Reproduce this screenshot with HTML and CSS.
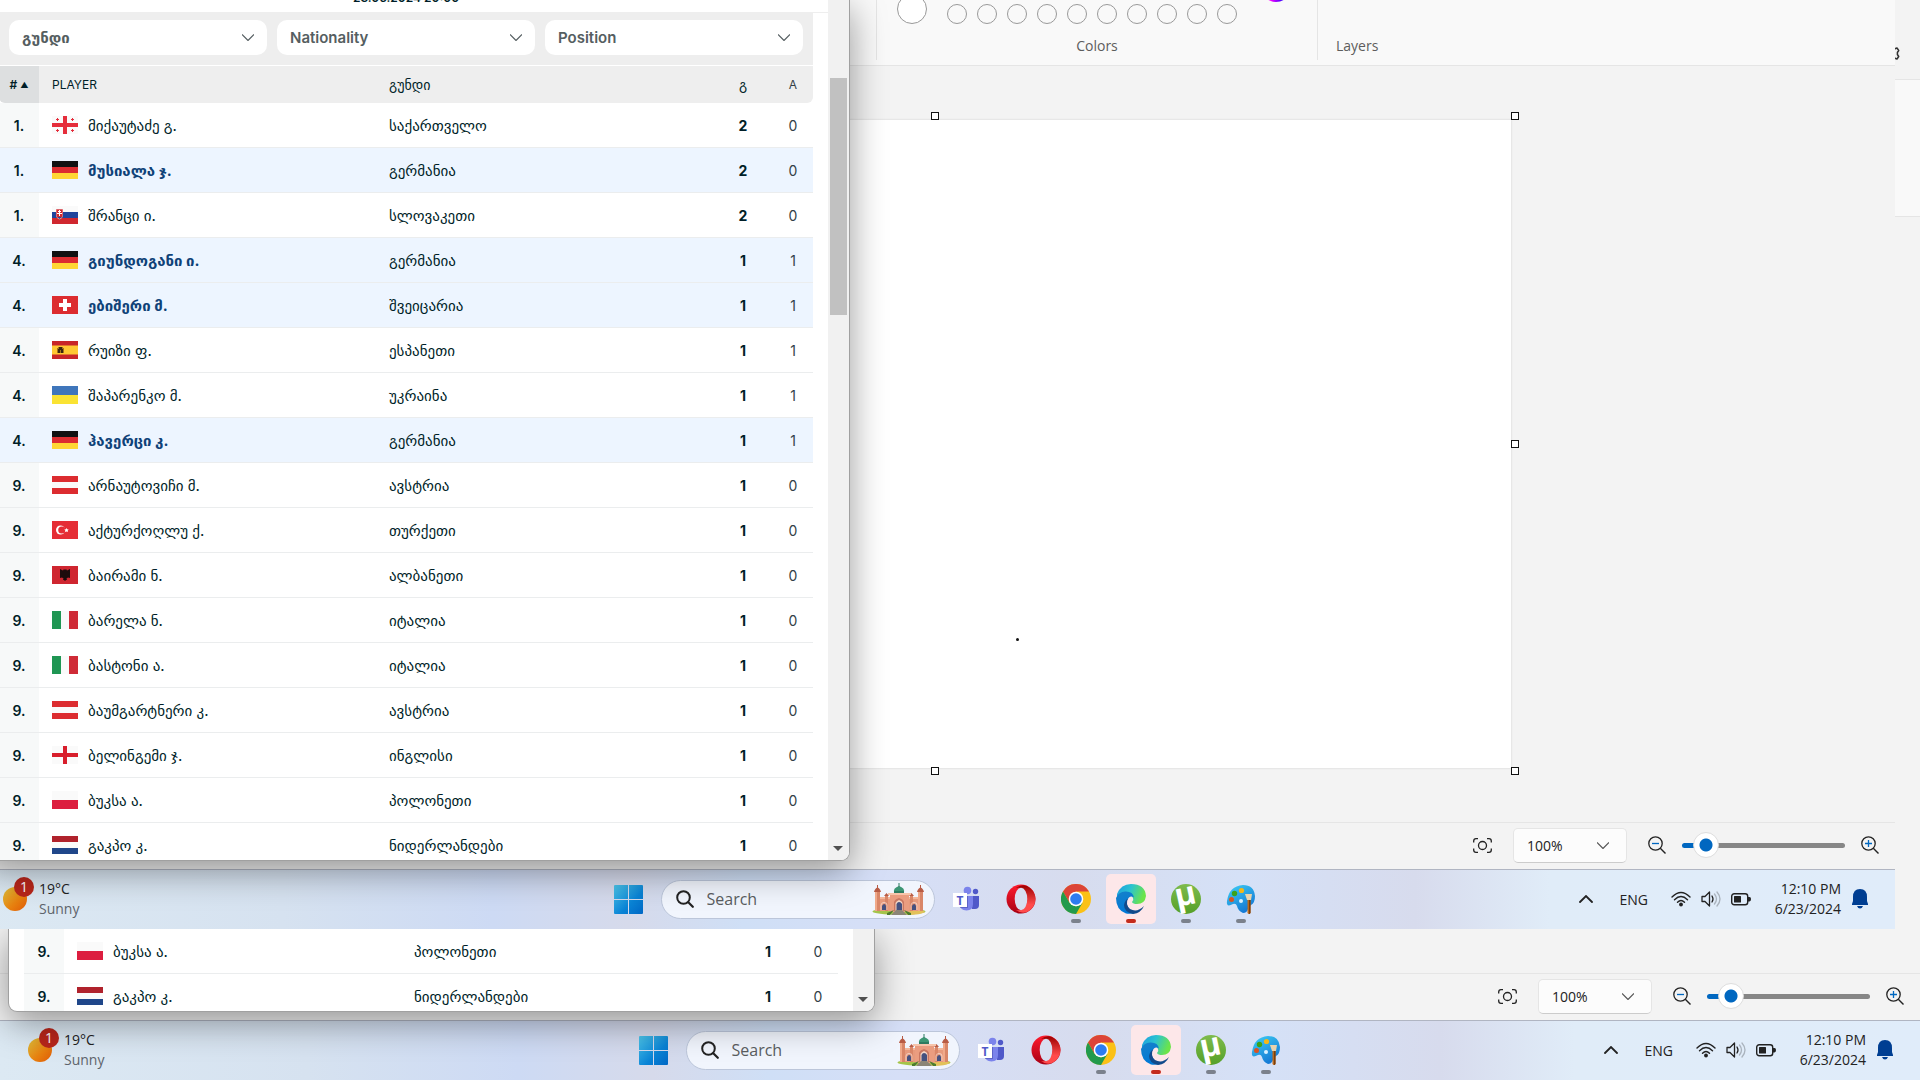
FILE: index.html
```html
<!DOCTYPE html>
<html lang="ka">
<head>
    <meta charset="UTF-8">
    <meta name="viewport" content="width=device-width, initial-scale=1.0">
    <title>Desktop</title>
    <link rel="stylesheet" href="styles.css">
</head>
<body>
    <!-- Shared icons and flags -->
    <svg class="sprite" aria-hidden="true">
        <defs>
            <linearGradient id="g-win" x1="0" y1="0" x2="1" y2="1"><stop offset="0" stop-color="#4cc5ea"/><stop offset="0.6" stop-color="#0a84d6"/><stop offset="1" stop-color="#0067c4"/></linearGradient>
            <linearGradient id="g-opera" x1="0" y1="0" x2="0" y2="1"><stop offset="0" stop-color="#ff1b2d"/><stop offset="1" stop-color="#a70014"/></linearGradient>
            <linearGradient id="g-opera2" x1="0" y1="0" x2="0" y2="1"><stop offset="0" stop-color="#9c0000"/><stop offset="0.7" stop-color="#ff4b4b"/></linearGradient>
            <linearGradient id="g-edge" x1="0" y1="0" x2="1" y2="0.3"><stop offset="0" stop-color="#1b9de2"/><stop offset="0.5" stop-color="#2cc3d0"/><stop offset="1" stop-color="#6be44a"/></linearGradient>
            <linearGradient id="g-edge2" x1="0" y1="0" x2="0.4" y2="1"><stop offset="0" stop-color="#1681c9"/><stop offset="1" stop-color="#0078d7"/></linearGradient>
            <linearGradient id="g-paint" x1="0" y1="0" x2="0.6" y2="1"><stop offset="0" stop-color="#3fd0f5"/><stop offset="1" stop-color="#1478d4"/></linearGradient>
            <linearGradient id="g-torrent" x1="0" y1="0" x2="0" y2="1"><stop offset="0" stop-color="#7ebb4c"/><stop offset="1" stop-color="#55a028"/></linearGradient>
            <linearGradient id="g-sun" x1="0" y1="0" x2="1" y2="1"><stop offset="0" stop-color="#e0c03a"/><stop offset="0.6" stop-color="#e8800f"/><stop offset="1" stop-color="#e05a08"/></linearGradient>
        </defs>

        <symbol id="flag-ge" viewBox="0 0 26 18"><path fill="#fafafa" d="M0 0h26v18H0z"/><path fill="#e52d3b" d="M11 0h4v18h-4zM0 7h26v4H0zM5 2h1v1h1v1H6v1H5V4H4V3h1zM20 2h1v1h1v1h-1v1h-1V4h-1V3h1zM5 13h1v1h1v1H6v1H5v-1H4v-1h1zM20 13h1v1h1v1h-1v1h-1v-1h-1v-1h1z"/></symbol>
        <symbol id="flag-de" viewBox="0 0 26 18"><path fill="#111" d="M0 0h26v6H0z"/><path fill="#dc2c30" d="M0 6h26v6H0z"/><path fill="#ffd633" d="M0 12h26v6H0z"/></symbol>
        <symbol id="flag-sk" viewBox="0 0 26 18"><path fill="#fafafa" d="M0 0h26v6H0z"/><path fill="#1f449c" d="M0 6h26v6H0z"/><path fill="#d0282f" d="M0 12h26v6H0z"/><path fill="#e8a5aa" d="M4 3h7v6q0 3-3.500 4.500Q4 12 4 9z"/><path fill="#d0282f" d="M4.500 3.500h6V9q0 2-1.500 3H6Q4.500 11 4.500 9z"/><path fill="#fff" d="M7 4h1v1h1v1H8v1h2v1H8v2H7V8H5V7h2V6H6V5h1z"/><path fill="#1f449c" d="M5.500 11h4l-2 2z"/></symbol>
        <symbol id="flag-ch" viewBox="0 0 26 18"><path fill="#dc2c30" d="M0 0h26v18H0z"/><path fill="#fff" d="M11 3h4v4h4v4h-4v4h-4v-4H7V7h4z"/></symbol>
        <symbol id="flag-es" viewBox="0 0 26 18"><path fill="#c82628" d="M0 0h26v18H0z"/><path fill="#ffc833" d="M0 4.500h26v9H0z"/><path fill="#a6741c" d="M5 7h1V6h5v1h1v5H5z"/><path fill="#3a2610" d="M7 6h3v2h1v4H9V9H8v3H6V8h1z"/></symbol>
        <symbol id="flag-ua" viewBox="0 0 26 18"><path fill="#3f76bb" d="M0 0h26v9H0z"/><path fill="#fae333" d="M0 9h26v9H0z"/></symbol>
        <symbol id="flag-at" viewBox="0 0 26 18"><path fill="#dc2c30" d="M0 0h26v18H0z"/><path fill="#fafafa" d="M0 6h26v6H0z"/></symbol>
        <symbol id="flag-tr" viewBox="0 0 26 18"><path fill="#e52d35" d="M0 0h26v18H0z"/><circle cx="8.500" cy="9" r="4.500" fill="#fff"/><circle cx="9.800" cy="9" r="3.600" fill="#e52d35"/><path fill="#fff" d="m14.500 7 .7 1.300 1.500.2-1 1.100.2 1.500-1.400-.6-1.500.6.300-1.500-1-1.100 1.500-.2z"/></symbol>
        <symbol id="flag-al" viewBox="0 0 26 18"><path fill="#cf2630" d="M0 0h26v18H0z"/><path fill="#1d0b0c" d="M8 3l3 1.500L12 3l1 1 1-1 1 1.500L18 3v9l-2-.5-1.500 1L15 14h-1l-1 1-1-1h-1l.5-1.500-1.500-1L8 12z"/></symbol>
        <symbol id="flag-it" viewBox="0 0 26 18"><path fill="#fafafa" d="M0 0h26v18H0z"/><path fill="#1f9653" d="M0 0h9v18H0z"/><path fill="#cf2b37" d="M17 0h9v18h-9z"/></symbol>
        <symbol id="flag-en" viewBox="0 0 26 18"><path fill="#fafafa" d="M0 0h26v18H0z"/><path fill="#d81e2c" d="M11 0h4v18h-4zM0 7h26v4H0z"/></symbol>
        <symbol id="flag-pl" viewBox="0 0 26 18"><path fill="#fafafa" d="M0 0h26v9H0z"/><path fill="#dc1e3f" d="M0 9h26v9H0z"/></symbol>
        <symbol id="flag-nl" viewBox="0 0 26 18"><path fill="#b0222c" d="M0 0h26v6H0z"/><path fill="#fafafa" d="M0 6h26v6H0z"/><path fill="#20478a" d="M0 12h26v6H0z"/></symbol>

        <symbol id="i-win" viewBox="0 0 29 29"><path fill="url(#g-win)" d="M1 0h13v14H0V1q0-1 1-1zM15 0h13q1 0 1 1v13H15zM0 15h14v14H1q-1 0-1-1zM15 15h14v13q0 1-1 1H15z"/></symbol>
        <symbol id="i-search" viewBox="0 0 18 18"><circle cx="7.500" cy="7.500" r="6.300" fill="none" stroke="#222" stroke-width="2"/><path stroke="#222" stroke-width="2.200" stroke-linecap="round" d="m12.500 12.500 4.300 4.300"/></symbol>
        <symbol id="i-palace" viewBox="0 0 54 32">
            <ellipse cx="27" cy="28.500" rx="26.500" ry="3.300" fill="#a5c44a"/><path fill="#e3c15a" d="M34 27q16-1 19 2-4 3-18 3z"/>
            <path fill="#e79a7c" d="M4 14h46v14H4z"/><path fill="#f3b79b" d="M4 14h46v2H4z"/>
            <path fill="#d98668" d="M3 9h5v19H3zM46 9h5v19h-5zM13 13h3v15h-3zM38 13h3v15h-3z"/>
            <path fill="#f0a98a" d="M3 9h2v19H3zM46 9h2v19h-2z"/>
            <path fill="#b85c45" d="M2 9q1-4 3.500-4.500Q8 5 9 9zM45 9q1-4 3.500-4.500Q51 5 52 9zM5 2h1v3H5zM48 2h1v3h-1zM12 13h5l-2.500-3zM37 13h5l-2.500-3z"/>
            <path fill="#ea9d80" d="M18 11h19v18H18z"/><path fill="#f7c4aa" d="M16 10h23v2H16z"/>
            <path fill="#3c9674" d="M22 9q-1-4 5-6 6 2 5 6z"/><path fill="#2d7b60" d="M26.500 0h1v4h-1zM22 8h10v2H22z"/>
            <path fill="#c97761" d="M22 28V19q1-3 5-4 4 1 5 4v9z"/><path fill="#f5d6c5" d="M23.500 28v-8q1-2 3.500-3 3 1 3.500 3v8z"/>
            <path fill="#45517f" d="M24.500 28v-7q1-2 2.500-2 2 0 3 2v7zM10 27v-4q1-2 2.200-2t1.800 2v4zM40 27v-4q1-2 2.200-2t1.800 2v4z"/>
            <path fill="#fff" d="M8.500 27v-5q1-3 3.500-3 3 0 3.500 3v5h-1v-5q-.5-2-2.500-2t-2.500 2v5zM38.500 27v-5q1-3 3.500-3 3 0 3.500 3v5h-1v-5q-.5-2-2.500-2t-2.500 2v5z" opacity=".5"/>
            <path fill="#8b8577" d="M24 27h6l5 5H19z"/><path fill="#4d7c2e" d="M15 30l7-3-4 5h-3zM39 30l-7-3 4 5h3z"/>
        </symbol>
        <symbol id="i-teams" viewBox="0 0 30 30"><circle cx="16.500" cy="6.500" r="3.800" fill="#7b83eb"/><circle cx="24.500" cy="7.500" r="2.700" fill="#5059c9"/><path fill="#5059c9" d="M20 12h8v9q0 4-4 4h-3z"/><path fill="#7b83eb" d="M9 12h13v8q0 6.500-6.500 6.500T9 20z"/><path fill="#4a50b0" d="M9 12h8v12H9z" opacity=".6"/><path fill="#fff" d="M2 9h14v14H2z"/><text x="9" y="20.500" class="glyph-teams">T</text></symbol>
        <symbol id="i-opera" viewBox="0 0 30 30"><ellipse cx="15" cy="15" rx="14.500" ry="14.500" fill="url(#g-opera)"/><path fill="url(#g-opera2)" d="M10 4q5-4 11-2 8 4 8.500 13-.5 9-8.500 13-6 2-11-2 10 2 11.500-11Q20 2 10 4z"/><ellipse cx="15" cy="15" rx="6.300" ry="11.300" fill="#d8def0"/></symbol>
        <symbol id="i-chrome" viewBox="0 0 30 30"><circle cx="15" cy="15" r="15" fill="#fbc116"/><path fill="#dc4437" d="M2 7.500A15 15 0 0 1 28 7.500H15L8.500 18.700z"/><path fill="#229a4c" d="M2 7.500A15 15 0 0 0 15 30l6.500-11.200-6.500 3.700-6.500-3.700z"/><circle cx="15" cy="15" r="7.300" fill="#fff"/><circle cx="15" cy="15" r="5.800" fill="#2d7cf0"/></symbol>
        <symbol id="i-edge" viewBox="0 0 30 30"><path fill="url(#g-edge)" d="M1 10Q5 0 15 0q14 0 15 12-1 8-9 8-4 0-5-2 2-2 1-4-3-6-9-4-4 1-7 4z"/><path fill="url(#g-edge2)" d="M0 14q3-7 10-6.500 7 0 8 6-3-2-5 0-5 5 0 11 3 4 8 4-6 2-11 1Q0 26 0 14z"/><path fill="#114a8b" d="M12 14.500q-3 6 2 10.500 7 4 14-3-3 7-11 8-9-2-9-9 1-5 4-6.500z"/></symbol>
        <symbol id="i-torrent" viewBox="0 0 30 30"><circle cx="15" cy="15" r="15" fill="url(#g-torrent)"/><text x="15" y="21" class="glyph-torrent" transform="rotate(-12 15 15)">µ</text></symbol>
        <symbol id="i-paint" viewBox="0 0 30 30"><path fill="url(#g-paint)" d="M17 1q11 0 12 11 0 7-4 9-2 1-3 4-1 4-5 4-5-2-6-7-1-3-4-2-7 4-6-3Q3 2 17 1z"/><circle cx="8.500" cy="9.500" r="2.700" fill="#3ba21a"/><circle cx="15.500" cy="6.500" r="2.600" fill="#f4b717"/><circle cx="5.500" cy="15.500" r="2.500" fill="#d85423"/><circle cx="15" cy="17" r="2" fill="#d8f0ff"/><path fill="#b8691c" d="M21.500 16h3v13l-1 1h-1l-1-1z"/><path fill="#7b3f0d" d="M23 16h1.500v13l-1 1H23z"/><path fill="#e8d2ad" d="M19 10h7l-1 6h-4z"/></symbol>

        <symbol id="i-sun" viewBox="0 0 24 24"><circle cx="12" cy="12" r="12" fill="url(#g-sun)"/></symbol>
        <symbol id="i-up" viewBox="0 0 14 8"><path fill="none" stroke="#222" stroke-width="1.800" stroke-linecap="round" d="m1 7 6-6 6 6"/></symbol>
        <symbol id="i-down" viewBox="0 0 12 7"><path fill="none" stroke="currentColor" stroke-width="1.200" d="m0 .5 6 6 6-6"/></symbol>
        <symbol id="i-wifi" viewBox="0 0 20 16"><path fill="none" stroke="#222" stroke-width="1.400" stroke-linecap="round" d="M1 6q9-9 18 0M3.500 8.700q6.500-6.500 13 0M6.500 11.300q3.500-3.500 7 0"/><circle cx="10" cy="13.500" r="1.900" fill="#222"/></symbol>
        <symbol id="i-sound" viewBox="0 0 20 16"><path fill="none" stroke="#222" stroke-width="1.300" stroke-linejoin="round" d="M1 5.500h3L8.500 1v14L4 10.500H1z"/><path fill="none" stroke="#222" stroke-width="1.300" stroke-linecap="round" d="M11 5q2 3 0 6"/><path fill="none" stroke="#aab3bd" stroke-width="1.300" stroke-linecap="round" d="M13.500 3q4 5 0 10M16 1q6 7 0 14"/></symbol>
        <symbol id="i-battery" viewBox="0 0 20 14"><rect x=".7" y="1.700" width="16" height="11" rx="2.500" fill="none" stroke="#222" stroke-width="1.400"/><rect x="3" y="4" width="7" height="6.500" rx=".5" fill="#222"/><path fill="#222" d="M17 5h1.500q1.500 0 1.500 2t-1.500 2.500H17z"/></symbol>
        <symbol id="i-bell" viewBox="0 0 16 20"><path fill="#003e92" d="M8 0q7 0 7 8v4l1 3v1H0v-1l1-3V8q0-8 7-8zM5 17h6q-1 2.500-3 2.500T5 17z"/></symbol>
        <symbol id="i-fit" viewBox="0 0 19 15"><circle cx="9.500" cy="7.500" r="4" fill="none" stroke="#222" stroke-width="1.300"/><path fill="none" stroke="#222" stroke-width="1.300" d="M.7 4.500V3q0-2.300 2.300-2.300h2M14 .7h2q2.300 0 2.300 2.300v1.500M18.300 10.500V12q0 2.300-2.300 2.300h-2M5 14.300H3Q.7 14.300.7 12v-1.500"/></symbol>
        <symbol id="i-minus" viewBox="0 0 18 18"><circle cx="7.500" cy="7.500" r="6.700" fill="none" stroke="#222" stroke-width="1.300"/><path stroke="#222" stroke-width="1.400" d="m12.300 12.300 5.200 5.200"/><path stroke="#0067c0" stroke-width="1.300" d="M4 7.500h7"/></symbol>
        <symbol id="i-plus" viewBox="0 0 18 18"><circle cx="7.500" cy="7.500" r="6.700" fill="none" stroke="#222" stroke-width="1.300"/><path stroke="#222" stroke-width="1.400" d="m12.300 12.300 5.200 5.200"/><path stroke="#0067c0" stroke-width="1.300" d="M4 7.500h7M7.500 4v7"/></symbol>
        <symbol id="i-gear" viewBox="0 0 20 20"><path fill="none" stroke="#333" stroke-width="1.500" stroke-linejoin="round" d="m8.500 2 1.500-.5 1.500.5.700 2 1.800.8 2-.8 1.700 2.500-1.300 2v2l1.300 2-1.700 2.500-2-.8-1.800.8-.7 2-1.500.5-1.500-.5-.7-2-1.800-.8-2 .8-1.700-2.500 1.300-2v-2L2.300 6.500 4 4l2 .8L7.800 4z"/><circle cx="10" cy="10" r="2.500" fill="none" stroke="#333" stroke-width="1.500"/></symbol>
    </svg>

    <!-- Desktop -->
    <div class="screen">
        <div class="menubar"><svg class="gear"><use href="#i-gear"/></svg></div>
        <div class="ribbon"></div>
        <div class="workspace"></div>

        <div class="statusbar">
            <svg class="fit"><use href="#i-fit"/></svg>
            <div class="zoom-box">
                <select aria-label="Zoom"><option>100%</option></select>
                <svg class="arrow"><use href="#i-down"/></svg>
            </div>
            <svg class="lens"><use href="#i-minus"/></svg>
            <input type="range" class="zoom-slider" min="0" max="100" value="8" aria-label="Zoom level">
            <svg class="lens"><use href="#i-plus"/></svg>
        </div>

        <div class="taskbar">
            <button class="weather">
                <span class="weather-icon"><svg><use href="#i-sun"/></svg><span class="badge">1</span></span>
                <span class="weather-text">19°C<small>Sunny</small></span>
            </button>
            <div class="apps">
                <button class="app" aria-label="Start"><svg class="start"><use href="#i-win"/></svg></button>
                <label class="search">
                    <svg class="lens"><use href="#i-search"/></svg>
                    <input type="text" placeholder="Search">
                    <svg class="palace"><use href="#i-palace"/></svg>
                </label>
                <button class="app" aria-label="Teams"><svg><use href="#i-teams"/></svg></button>
                <button class="app" aria-label="Opera"><svg><use href="#i-opera"/></svg></button>
                <button class="app open" aria-label="Chrome"><svg><use href="#i-chrome"/></svg></button>
                <button class="app open alert" aria-label="Edge"><svg><use href="#i-edge"/></svg></button>
                <button class="app open" aria-label="uTorrent"><svg><use href="#i-torrent"/></svg></button>
                <button class="app open" aria-label="Paint"><svg><use href="#i-paint"/></svg></button>
            </div>
            <div class="tray">
                <svg class="up"><use href="#i-up"/></svg>
                <span class="lang">ENG</span>
                <svg class="wifi"><use href="#i-wifi"/></svg>
                <svg class="sound"><use href="#i-sound"/></svg>
                <svg class="battery"><use href="#i-battery"/></svg>
                <span class="clock">12:10 PM<br>6/23/2024</span>
                <svg class="bell"><use href="#i-bell"/></svg>
            </div>
        </div>

        <div class="browser browser-short">
            <div class="page">
                <table class="players">
                    <colgroup><col class="col-rank"><col><col><col class="col-goals"><col class="col-assists"></colgroup>
                    <tbody>
                        <tr><td class="rank">9.</td><td><a href="#" class="player"><svg class="flag"><use href="#flag-pl"/></svg>ბუკსა ა.</a></td><td>პოლონეთი</td><td class="goals">1</td><td class="assists">0</td></tr>
                        <tr><td class="rank">9.</td><td><a href="#" class="player"><svg class="flag"><use href="#flag-nl"/></svg>გაკპო კ.</a></td><td>ნიდერლანდები</td><td class="goals">1</td><td class="assists">0</td></tr>
                    </tbody>
                </table>
            </div>
            <div class="scrollbar"></div>
        </div>
    </div>

    <!-- Same desktop, shifted up and left over the first one -->
    <div class="screen screen-front">
        <div class="menubar"></div>
        <div class="ribbon">
            <div class="ribbon-group colors">
                <div class="swatches">
                    <span class="current"></span>
                    <div class="palette"><i></i><i></i><i></i><i></i><i></i><i></i><i></i><i></i><i></i><i></i></div>
                    <span class="wheel"></span>
                </div>
                <span class="group-name">Colors</span>
            </div>
            <div class="ribbon-group layers">
                <span class="group-name">Layers</span>
            </div>
        </div>
        <div class="workspace">
            <div class="canvas">
                <span class="handle top"></span>
                <span class="handle top right"></span>
                <span class="handle middle right"></span>
                <span class="handle bottom"></span>
                <span class="handle bottom right"></span>
                <span class="ink"></span>
            </div>
        </div>

        <div class="statusbar">
            <svg class="fit"><use href="#i-fit"/></svg>
            <div class="zoom-box">
                <select aria-label="Zoom"><option>100%</option></select>
                <svg class="arrow"><use href="#i-down"/></svg>
            </div>
            <svg class="lens"><use href="#i-minus"/></svg>
            <input type="range" class="zoom-slider" min="0" max="100" value="8" aria-label="Zoom level">
            <svg class="lens"><use href="#i-plus"/></svg>
        </div>

        <div class="taskbar">
            <button class="weather">
                <span class="weather-icon"><svg><use href="#i-sun"/></svg><span class="badge">1</span></span>
                <span class="weather-text">19°C<small>Sunny</small></span>
            </button>
            <div class="apps">
                <button class="app" aria-label="Start"><svg class="start"><use href="#i-win"/></svg></button>
                <label class="search">
                    <svg class="lens"><use href="#i-search"/></svg>
                    <input type="text" placeholder="Search">
                    <svg class="palace"><use href="#i-palace"/></svg>
                </label>
                <button class="app" aria-label="Teams"><svg><use href="#i-teams"/></svg></button>
                <button class="app" aria-label="Opera"><svg><use href="#i-opera"/></svg></button>
                <button class="app open" aria-label="Chrome"><svg><use href="#i-chrome"/></svg></button>
                <button class="app open alert" aria-label="Edge"><svg><use href="#i-edge"/></svg></button>
                <button class="app open" aria-label="uTorrent"><svg><use href="#i-torrent"/></svg></button>
                <button class="app open" aria-label="Paint"><svg><use href="#i-paint"/></svg></button>
            </div>
            <div class="tray">
                <svg class="up"><use href="#i-up"/></svg>
                <span class="lang">ENG</span>
                <svg class="wifi"><use href="#i-wifi"/></svg>
                <svg class="sound"><use href="#i-sound"/></svg>
                <svg class="battery"><use href="#i-battery"/></svg>
                <span class="clock">12:10 PM<br>6/23/2024</span>
                <svg class="bell"><use href="#i-bell"/></svg>
            </div>
        </div>

        <div class="browser">
            <div class="page">
                <div class="match-date">23.06.2024 20:00</div>
                <div class="filters">
                    <div class="filter"><select aria-label="გუნდი"><option>გუნდი</option></select><svg class="arrow"><use href="#i-down"/></svg></div>
                    <div class="filter"><select aria-label="Nationality"><option>Nationality</option></select><svg class="arrow"><use href="#i-down"/></svg></div>
                    <div class="filter"><select aria-label="Position"><option>Position</option></select><svg class="arrow"><use href="#i-down"/></svg></div>
                </div>
                <table class="players">
                    <colgroup><col class="col-rank"><col><col><col class="col-goals"><col class="col-assists"></colgroup>
                    <thead>
                        <tr><th class="rank"># <span class="sort">▲</span></th><th>PLAYER</th><th class="geo">გუნდი</th><th class="goals geo">გ</th><th class="assists">A</th></tr>
                    </thead>
                    <tbody>
                        <tr><td class="rank">1.</td><td><a href="#" class="player"><svg class="flag"><use href="#flag-ge"/></svg>მიქაუტაძე გ.</a></td><td>საქართველო</td><td class="goals">2</td><td class="assists">0</td></tr>
                        <tr class="live"><td class="rank">1.</td><td><a href="#" class="player"><svg class="flag"><use href="#flag-de"/></svg>მუსიალა ჯ.</a></td><td>გერმანია</td><td class="goals">2</td><td class="assists">0</td></tr>
                        <tr><td class="rank">1.</td><td><a href="#" class="player"><svg class="flag"><use href="#flag-sk"/></svg>შრანცი ი.</a></td><td>სლოვაკეთი</td><td class="goals">2</td><td class="assists">0</td></tr>
                        <tr class="live"><td class="rank">4.</td><td><a href="#" class="player"><svg class="flag"><use href="#flag-de"/></svg>გიუნდოგანი ი.</a></td><td>გერმანია</td><td class="goals">1</td><td class="assists">1</td></tr>
                        <tr class="live"><td class="rank">4.</td><td><a href="#" class="player"><svg class="flag"><use href="#flag-ch"/></svg>ებიშერი მ.</a></td><td>შვეიცარია</td><td class="goals">1</td><td class="assists">1</td></tr>
                        <tr><td class="rank">4.</td><td><a href="#" class="player"><svg class="flag"><use href="#flag-es"/></svg>რუიზი ფ.</a></td><td>ესპანეთი</td><td class="goals">1</td><td class="assists">1</td></tr>
                        <tr><td class="rank">4.</td><td><a href="#" class="player"><svg class="flag"><use href="#flag-ua"/></svg>შაპარენკო მ.</a></td><td>უკრაინა</td><td class="goals">1</td><td class="assists">1</td></tr>
                        <tr class="live"><td class="rank">4.</td><td><a href="#" class="player"><svg class="flag"><use href="#flag-de"/></svg>ჰავერცი კ.</a></td><td>გერმანია</td><td class="goals">1</td><td class="assists">1</td></tr>
                        <tr><td class="rank">9.</td><td><a href="#" class="player"><svg class="flag"><use href="#flag-at"/></svg>არნაუტოვიჩი მ.</a></td><td>ავსტრია</td><td class="goals">1</td><td class="assists">0</td></tr>
                        <tr><td class="rank">9.</td><td><a href="#" class="player"><svg class="flag"><use href="#flag-tr"/></svg>აქტურქოღლუ ქ.</a></td><td>თურქეთი</td><td class="goals">1</td><td class="assists">0</td></tr>
                        <tr><td class="rank">9.</td><td><a href="#" class="player"><svg class="flag"><use href="#flag-al"/></svg>ბაირამი ნ.</a></td><td>ალბანეთი</td><td class="goals">1</td><td class="assists">0</td></tr>
                        <tr><td class="rank">9.</td><td><a href="#" class="player"><svg class="flag"><use href="#flag-it"/></svg>ბარელა ნ.</a></td><td>იტალია</td><td class="goals">1</td><td class="assists">0</td></tr>
                        <tr><td class="rank">9.</td><td><a href="#" class="player"><svg class="flag"><use href="#flag-it"/></svg>ბასტონი ა.</a></td><td>იტალია</td><td class="goals">1</td><td class="assists">0</td></tr>
                        <tr><td class="rank">9.</td><td><a href="#" class="player"><svg class="flag"><use href="#flag-at"/></svg>ბაუმგარტნერი კ.</a></td><td>ავსტრია</td><td class="goals">1</td><td class="assists">0</td></tr>
                        <tr><td class="rank">9.</td><td><a href="#" class="player"><svg class="flag"><use href="#flag-en"/></svg>ბელინგემი ჯ.</a></td><td>ინგლისი</td><td class="goals">1</td><td class="assists">0</td></tr>
                        <tr><td class="rank">9.</td><td><a href="#" class="player"><svg class="flag"><use href="#flag-pl"/></svg>ბუკსა ა.</a></td><td>პოლონეთი</td><td class="goals">1</td><td class="assists">0</td></tr>
                        <tr><td class="rank">9.</td><td><a href="#" class="player"><svg class="flag"><use href="#flag-nl"/></svg>გაკპო კ.</a></td><td>ნიდერლანდები</td><td class="goals">1</td><td class="assists">0</td></tr>
                    </tbody>
                </table>
            </div>
            <div class="scrollbar"><div class="thumb"></div></div>
        </div>
    </div>
</body>
</html>
```
FILE: styles.css
```css
* { box-sizing: border-box; }

body {
    margin: 0;
    height: 100vh;
    position: relative;
    overflow: hidden;
    font-family: "Open Sans", "Noto Sans", sans-serif;
    font-size: 14px;
    color: #222;
}

button, input, select { font: inherit; color: inherit; }
button { border: 0; padding: 0; background: none; }
svg { display: block; flex: none; }
.sprite { position: absolute; width: 0; height: 0; }

.screen {
    position: relative;
    width: 100%;
    height: 100vh;
    display: flex;
    flex-direction: column;
    overflow: hidden;
    background: #f3f3f3;
}

/* the copy pasted on top, scrolled off the top left corner */
.screen-front {
    position: absolute;
    top: -151px;
    left: -25px;
}

/* Paint: menu, ribbon, canvas */
.menubar {
    height: 79px;
    display: flex;
    justify-content: flex-end;
    align-items: flex-end;
    padding: 0 19px 15px;
}

.gear { width: 20px; height: 20px; }

.ribbon {
    height: 138px;
    display: grid;
    grid-template-columns: 441px 1fr;
    padding: 0 0 5px 901px;
    background: #f9f9f9;
    border-top: 1px solid #e5e5e5;
    border-bottom: 1px solid #e5e5e5;
}

.ribbon-group {
    display: flex;
    flex-direction: column;
    justify-content: flex-end;
    border-left: 1px solid #e5e5e5;
    padding-bottom: 4px;
}

.group-name { line-height: 20px; color: #5d5d5d; }
.colors .group-name { text-align: center; }
.layers .group-name { padding-left: 18px; }

.swatches {
    display: flex;
    align-items: flex-end;
    padding-left: 20px;
    margin-bottom: 12px;
}

.current {
    width: 30px;
    height: 30px;
    border: 1px solid #999;
    border-radius: 50%;
    background: #fff;
}

.palette { display: flex; gap: 10px; padding-left: 20px; }
.palette i {
    width: 20px;
    height: 20px;
    border: 1px solid #999;
    border-radius: 50%;
}

.wheel {
    width: 30px;
    height: 30px;
    margin: 0 0 22px 24px;
    border-radius: 50%;
    background: linear-gradient(90deg, #f0f 30%, #40f 70%);
}

.workspace {
    flex: 1;
    display: flex;
    justify-content: center;
    align-items: center;
}

.canvas {
    position: relative;
    width: 60%;
    aspect-ratio: 16 / 9;
    background: #fff;
    box-shadow: 0 0 2px #ccc;
}

.handle {
    position: absolute;
    left: calc(50% - 4px);
    width: 8px;
    height: 8px;
    border: 1px solid #111;
    background: #fff;
}
.handle.right { left: 100%; }
.handle.top { bottom: 100%; }
.handle.middle { top: calc(50% - 4px); }
.handle.bottom { top: calc(100% - 1px); }

.ink {
    position: absolute;
    left: 57%;
    top: 80%;
    width: 3px;
    height: 3px;
    border-radius: 50%;
    background: #111;
}

/* Paint status bar */
.statusbar {
    height: 47px;
    display: flex;
    align-items: center;
    justify-content: flex-end;
    padding: 0 16px 2px;
    border-top: 1px solid #e5e5e5;
    color: #222;
}

.fit { width: 19px; height: 15px; margin-right: 21px; }
.lens { width: 18px; height: 18px; }

.zoom-box {
    position: relative;
    width: 114px;
    margin-right: 21px;
}
.zoom-box select {
    appearance: none;
    display: block;
    width: 100%;
    height: 35px;
    padding: 0 13px;
    border: 1px solid #e5e5e5;
    border-bottom-color: #ccc;
    border-radius: 5px;
    background: #fcfcfc;
}
.zoom-box .arrow {
    position: absolute;
    right: 18px;
    top: 14px;
    width: 12px;
    height: 7px;
    color: #555;
}

.zoom-slider {
    appearance: none;
    width: 163px;
    height: 5px;
    margin: 0 16px;
    border-radius: 3px;
    background: linear-gradient(90deg, #0067c0 15%, #868686 15%);
}
.zoom-slider::-webkit-slider-thumb {
    appearance: none;
    width: 26px;
    height: 26px;
    border: 1px solid #ddd;
    border-radius: 50%;
    background: radial-gradient(circle, #0067c0 6px, #fff 7px);
}

/* Windows taskbar */
.taskbar {
    height: 60px;
    display: grid;
    grid-template-columns: 1fr auto 1fr;
    box-shadow: inset 0 1px #b0b5c2;
    background: linear-gradient(90deg, #dce9f3 0%, #d6e2f0 16%, #cddaf4 27%, #d6daeb 34%, #cfdff6 40%, #d6dff7 47%, #d7dcee 57%, #d5e1f7 66%, #d7dbed 75%, #e0ecf8 82%, #e0ecfa 100%);
}

.weather {
    display: flex;
    align-items: center;
    gap: 12px;
    padding-left: 28px;
    text-align: left;
}
.weather-icon { position: relative; }
.weather-icon svg { width: 24px; height: 24px; }
.badge {
    position: absolute;
    left: 11px;
    top: -10px;
    width: 20px;
    height: 20px;
    border-radius: 50%;
    background: #b8261b;
    color: #fff;
    line-height: 20px;
    text-align: center;
}
.weather-text { line-height: 20px; padding-bottom: 1px; }
.weather-text small { display: block; font-size: 14px; color: #5e646b; }

.apps { display: flex; align-items: center; }

.app {
    position: relative;
    width: 50px;
    height: 50px;
    margin: 0 3px 0 2px;
    border-radius: 5px;
    display: flex;
    justify-content: center;
    align-items: center;
}
.app svg { width: 30px; height: 30px; }
.app .start { width: 29px; height: 29px; }
.app.open::after {
    content: "";
    position: absolute;
    left: 20px;
    bottom: 1px;
    width: 10px;
    height: 4px;
    border-radius: 2px;
    background: #7b818c;
}
.app.alert { background: #fde7e9; }
.app.alert::after { background: #c42b1c; }

.search {
    width: 274px;
    height: 39px;
    margin: 0 4px;
    padding: 0 8px 0 14px;
    display: flex;
    align-items: center;
    gap: 13px;
    border: 1px solid #bcc6da;
    border-radius: 20px;
    background: #f1f5fd;
}
.search input {
    flex: 1;
    min-width: 0;
    padding: 0;
    border: 0;
    background: none;
    font-size: 16px;
}
.search input::placeholder { color: #5a5d61; opacity: 1; }
.palace { width: 54px; height: 32px; }

.glyph-teams { font: bold 12px "Open Sans", sans-serif; fill: #5059c9; text-anchor: middle; }
.glyph-torrent { font: bold 32px "Open Sans", sans-serif; fill: #fff; text-anchor: middle; }

.tray {
    display: flex;
    align-items: center;
    justify-content: flex-end;
    padding-right: 27px;
}
.up { width: 14px; height: 8px; margin-right: 27px; }
.lang { margin-right: 23px; }
.wifi { width: 20px; height: 16px; margin-right: 10px; }
.sound { width: 20px; height: 16px; margin-right: 10px; }
.battery { width: 20px; height: 14px; margin-right: 20px; }
.clock { min-width: 70px; line-height: 20px; padding-bottom: 1px; text-align: right; margin-right: 11px; }
.bell { width: 16px; height: 20px; }

/* Browser window with the scorers table */
.browser {
    position: absolute;
    top: 151px;
    left: 8px;
    bottom: 68px;
    width: 867px;
    display: flex;
    overflow: hidden;
    border: 1px solid #a0a0a0;
    border-top: 0;
    border-radius: 0 0 9px 9px;
    background: #fff;
    box-shadow: 0 10px 36px rgba(0, 0, 0, 0.4);
}
.browser-short { top: auto; height: 83px; }

.page {
    flex: 1;
    padding: 0 15px;
    font-family: Inter, "DejaVu Sans", sans-serif;
    color: #001e28;
}

.match-date {
    height: 13px;
    margin-right: -15px;
    padding: 0 15px 6px 0;
    display: flex;
    justify-content: center;
    align-items: flex-end;
    border-bottom: 1px solid #eee;
    font-size: 12px;
    font-weight: 600;
    line-height: 16px;
}

.filters {
    display: grid;
    grid-template-columns: repeat(3, 1fr);
    gap: 10px;
    padding: 7px 10px 10px;
    background: #eee;
    border-bottom: 1px solid #fff;
}
.filter { position: relative; }
.filter select {
    appearance: none;
    display: block;
    width: 100%;
    height: 35px;
    padding: 0 13px;
    border: 0;
    border-radius: 10px;
    background: #fff;
    color: #555e61;
    font-size: 15px;
    font-weight: 600;
}
.filter .arrow {
    position: absolute;
    right: 13px;
    top: 14px;
    width: 12px;
    height: 7px;
    color: #555e61;
}

.players {
    width: 100%;
    table-layout: fixed;
    border-collapse: separate;
    border-spacing: 0;
}
.col-rank { width: 40px; }
.col-goals { width: 60px; }
.col-assists { width: 40px; }

.players th {
    height: 37px;
    padding: 0 13px;
    background: #eee;
    font-size: 12px;
    font-weight: 400;
    text-align: left;
}
.players th.geo { font-size: 14px; }
.players th:last-child { border-radius: 0 0 6px 0; }
.players th.rank {
    border-radius: 0 0 0 6px;
    background: #dddfe0;
    font-weight: 600;
    white-space: nowrap;
}
.sort { font-size: 8px; vertical-align: 1px; }

.players td {
    height: 45px;
    padding: 0 13px;
    border-bottom: 1px solid #ebedee;
    font-size: 15px;
}
.players .rank, .players .goals, .players .assists {
    padding: 0;
    text-align: center;
}
.players td.rank, .players td.goals, .players td.assists { font-size: 14px; }
.players td.rank { background: #f7f9f9; font-weight: 600; }
.players td.goals { font-weight: 700; }
.players .assists { color: #333f48; }

.player {
    display: flex;
    align-items: center;
    color: inherit;
    text-decoration: none;
}
.flag { width: 26px; height: 18px; margin-right: 10px; }

.players .live td { background: #edf5ff; }
.live .player { color: #0f4278; font-weight: 700; }

.scrollbar {
    position: relative;
    width: 21px;
    padding: 78px 2px 0;
    background: #f1f1f1;
}
.thumb { height: 237px; background: #c1c1c1; }
.scrollbar::after {
    content: "";
    position: absolute;
    left: 5px;
    bottom: 9px;
    border: 5px solid transparent;
    border-top-color: #505050;
    border-bottom: 0;
}
```
